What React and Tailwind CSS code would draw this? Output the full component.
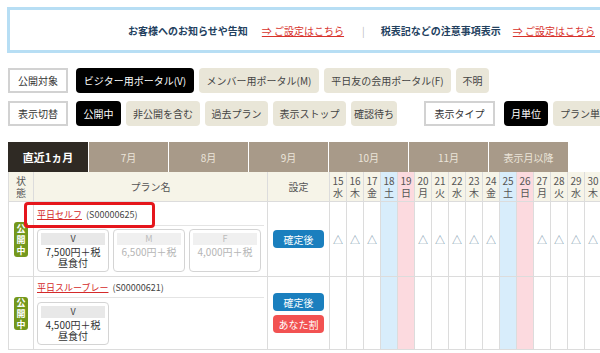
import React from 'react'

const DAYS = [
  [15, '水'], [16, '木'], [17, '金'], [18, '土'], [19, '日'], [20, '月'], [21, '火'], [22, '水'],
  [23, '木'], [24, '金'], [25, '土'], [26, '日'], [27, '月'], [28, '火'], [29, '水'], [30, '木'],
]
const TABS = ['7月', '8月', '9月', '10月', '11月', '表示月以降']
const COLS = 'grid grid-cols-[25px_234px_62px_repeat(16,17px)]'

const dayBg = (w) => (w === '土' ? 'bg-[#d8edfb]' : w === '日' ? 'bg-[#fcdadf]' : '')

function Label({ children, w }) {
  return (
    <div className={`${w} h-[25px] shrink-0 flex items-center justify-center border-2 border-[#d2d2d2] bg-white text-[#333]`}>
      {children}
    </div>
  )
}

function Btn({ children, w, active }) {
  return (
    <div className={`${w} h-[25px] flex items-center justify-center rounded-[4px] shrink-0 ${active ? 'bg-black text-white' : 'bg-[#e9e6d8] text-[#444]'}`}>
      {children}
    </div>
  )
}

function Badge({ h }) {
  return (
    <div className={`w-[14px] ${h} rounded-[3px] bg-[#74981c] text-white text-[9px] leading-[11px] flex flex-col items-center justify-center font-bold`}>
      <span>公</span><span>開</span><span>中</span>
    </div>
  )
}

function PriceBox({ label, price, lunch, off, w = 'w-[72px]' }) {
  return (
    <div className={`${w} border border-[#d4d4d4] rounded-[4px] p-[3px] flex flex-col`}>
      <div className={`h-[12px] leading-[12px] text-center text-[9px] ${off ? 'bg-[#f0f0f0] text-[#bbb]' : 'bg-[#e8e8e8] text-[#444]'}`}>{label}</div>
      <div className={`text-center text-[10px] leading-[11px] mt-[1px] ${off ? 'text-[#b5b5b5]' : 'text-[#333]'}`}>{price}</div>
      {lunch && <div className="text-center text-[10px] leading-[11px] text-[#333]">{lunch}</div>}
    </div>
  )
}

function DayCells({ marks }) {
  return DAYS.map(([d, w]) => (
    <div key={d} className={`border-r border-[#dcdcdc] flex items-center justify-center text-[10px] text-[#7d99ad] ${dayBg(w)}`}>
      {marks && w !== '土' && w !== '日' ? '△' : ''}
    </div>
  ))
}

export default function App() {
  return (
    <div className="w-[600px] h-[353px] overflow-hidden bg-white font-['Noto_Sans_CJK_JP',sans-serif] text-[10px]">
      {/* notice bar */}
      <div className="pt-[7px] pl-[7px]">
        <div className="w-[640px] h-[46px] border-[3px] border-[#b7def4] flex items-center pl-[118px] whitespace-nowrap">
          <span className="font-bold text-[#22405e]">お客様へのお知らせや告知</span>
          <span className="ml-[14px] text-[#d8322c] underline">⇒ ご設定はこちら</span>
          <span className="ml-[18px] text-[#bbb]">|</span>
          <span className="ml-[16px] font-bold text-[#22405e]">税表記などの注意事項表示</span>
          <span className="ml-[12px] text-[#d8322c] underline">⇒ ご設定はこちら</span>
        </div>
      </div>

      {/* filters */}
      <div className="pl-[8px] mt-[15px] flex items-center whitespace-nowrap">
        <Label w="w-[60px]">公開対象</Label>
        <div className="ml-[8px] flex gap-[5px] shrink-0">
          <Btn w="w-[118px]" active>ビジター用ポータル(V)</Btn>
          <Btn w="w-[120px]">メンバー用ポータル(M)</Btn>
          <Btn w="w-[127px]">平日友の会用ポータル(F)</Btn>
          <Btn w="w-[33px]">不明</Btn>
        </div>
      </div>
      <div className="pl-[8px] mt-[8px] flex items-center whitespace-nowrap">
        <Label w="w-[60px]">表示切替</Label>
        <div className="ml-[8px] flex gap-[5px] shrink-0">
          <Btn w="w-[45px]" active>公開中</Btn>
          <Btn w="w-[74px]">非公開を含む</Btn>
          <Btn w="w-[63px]">過去プラン</Btn>
          <Btn w="w-[73px]">表示ストップ</Btn>
          <Btn w="w-[46px]">確認待ち</Btn>
        </div>
        <div className="ml-[27px] shrink-0"><Label w="w-[71px]">表示タイプ</Label></div>
        <div className="ml-[9px] flex gap-[5px] shrink-0">
          <Btn w="w-[44px]" active>月単位</Btn>
          <Btn w="w-[64px]">プラン単位</Btn>
        </div>
      </div>

      {/* month tabs */}
      <div className="pl-[8px] mt-[16px] flex h-[30px]">
        <div className="w-[80px] shrink-0 bg-[#2f2a24] text-white font-bold text-[11px] flex items-center justify-center">直近1ヵ月</div>
        {TABS.map(t => (
          <div key={t} className="w-[80px] shrink-0 border-l border-white bg-[#a89a89] text-[#ece5da] flex items-center justify-center">{t}</div>
        ))}
      </div>

      {/* table */}
      <div className="pl-[8px]">
        <div className={`${COLS} h-[30px] bg-[#f6f4e8] border-l border-b border-[#dcdcdc] text-[#555]`}>
          <div className="border-r border-[#dcdcdc] flex flex-col items-center justify-center leading-[12px]">
            <span>状</span><span>態</span>
          </div>
          <div className="border-r border-[#dcdcdc] flex items-center justify-center">プラン名</div>
          <div className="border-r border-[#dcdcdc] flex items-center justify-center">設定</div>
          {DAYS.map(([d, w]) => (
            <div key={d} className={`border-r border-[#dcdcdc] flex flex-col items-center justify-center leading-[12px] ${dayBg(w)}`}>
              <span>{d}</span><span>{w}</span>
            </div>
          ))}
        </div>

        {/* row 1 */}
        <div className={`${COLS} h-[75px] border-l border-b border-[#dcdcdc]`}>
          <div className="border-r border-[#dcdcdc] flex items-center justify-center"><Badge h="h-[35px]" /></div>
          <div className="relative border-r border-[#dcdcdc] px-[3px]">
            <div className="h-[24px] border-b border-[#e4e4e4] pt-[7px] leading-[12px] text-[9px] whitespace-nowrap">
              <span className="text-[#d42a2a] underline">平日セルフ</span>
              <span className="ml-[4px] text-[#444]">(S00000625)</span>
            </div>
            <div className="mt-[3px] flex gap-[4px]">
              <PriceBox label="V" price="7,500円＋税" lunch="昼食付" />
              <PriceBox label="M" price="6,500円＋税" off />
              <PriceBox label="F" price="4,000円＋税" off />
            </div>
            <div className="absolute left-[-10px] top-[0px] w-[131px] h-[26px] border-[3px] border-[#e5161c] rounded-[4px]" />
          </div>
          <div className="border-r border-[#dcdcdc] flex items-center justify-center">
            <div className="w-[51px] h-[18px] rounded-[4px] bg-[#1a7fbe] text-white flex items-center justify-center">確定後</div>
          </div>
          <DayCells marks />
        </div>

        {/* row 2 */}
        <div className={`${COLS} h-[73px] border-l border-b border-[#dcdcdc]`}>
          <div className="border-r border-[#dcdcdc] flex items-center justify-center"><Badge h="h-[33px]" /></div>
          <div className="border-r border-[#dcdcdc] px-[3px]">
            <div className="h-[21px] border-b border-[#e4e4e4] pt-[5px] leading-[12px] text-[9px] whitespace-nowrap">
              <span className="text-[#d42a2a] underline">平日スルーブレー</span>
              <span className="ml-[4px] text-[#444]">(S00000621)</span>
            </div>
            <div className="mt-[4px] flex">
              <PriceBox label="V" price="4,500円＋税" lunch="昼食付" w="w-[72px]" />
            </div>
          </div>
          <div className="border-r border-[#dcdcdc] flex flex-col items-center justify-center gap-[4px]">
            <div className="w-[51px] h-[18px] rounded-[4px] bg-[#1a7fbe] text-white flex items-center justify-center">確定後</div>
            <div className="w-[51px] h-[18px] rounded-[4px] bg-[#f25252] text-white flex items-center justify-center">あなた割</div>
          </div>
          <DayCells />
        </div>
      </div>
    </div>
  )
}
